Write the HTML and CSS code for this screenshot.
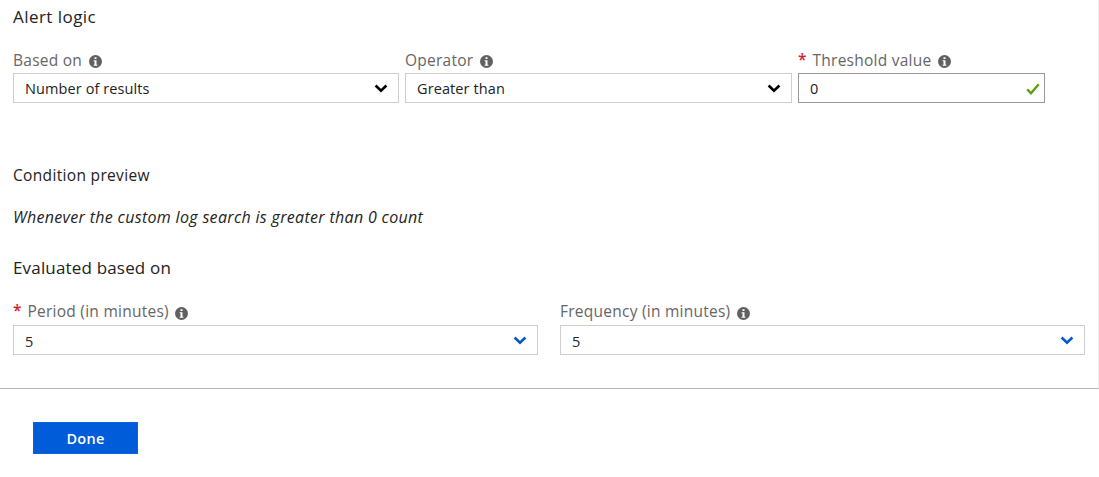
FILE: index.html
```html
<!DOCTYPE html>
<html lang="en">
<head>
<meta charset="utf-8">
<title>Alert logic</title>
<link rel="stylesheet" href="styles.css">
</head>
<body>
<svg class="defs" width="0" height="0" aria-hidden="true">
  <symbol id="info" viewBox="0 0 13 13"><circle cx="6.5" cy="6.5" r="6.5" fill="#606060"/><path d="M5.5 2.2h2v1.9h-2zM4.6 5.2h2.9v4.5h.9v1.1H4.6V9.7h.9V6.3h-.9z" fill="#fff"/></symbol>
  <symbol id="chevron" viewBox="0 0 14 9"><path d="M1.6 1.5 7 6.6l5.4-5.1" fill="none" stroke="currentColor" stroke-width="2.6"/></symbol>
  <symbol id="check" viewBox="0 0 14 12"><path d="M1.2 6.4 5 10.2 12.7 1.2" fill="none" stroke="currentColor" stroke-width="2.3"/></symbol>
</svg>
<main class="panel">
  <h2 class="title"><span class="t-alert">Alert logic</span></h2>
  <div class="row logic">
    <div class="field">
      <label class="label"><span>Based on</span><svg class="info"><use href="#info"/></svg></label>
      <div class="box"><span>Number of results</span><svg class="chevron"><use href="#chevron"/></svg></div>
    </div>
    <div class="field">
      <label class="label"><span>Operator</span><svg class="info"><use href="#info"/></svg></label>
      <div class="box"><span>Greater than</span><svg class="chevron"><use href="#chevron"/></svg></div>
    </div>
    <div class="field">
      <label class="label"><b class="star">*</b><span>Threshold value</span><svg class="info"><use href="#info"/></svg></label>
      <div class="box valid"><span>0</span><svg class="check"><use href="#check"/></svg></div>
    </div>
  </div>
  <h3 class="subtitle"><span>Condition preview</span></h3>
  <p class="preview"><span>Whenever the custom log search is greater than 0 count</span></p>
  <h2 class="title"><span>Evaluated based on</span></h2>
  <div class="row timing">
    <div class="field">
      <label class="label"><b class="star">*</b><span>Period (in minutes)</span><svg class="info"><use href="#info"/></svg></label>
      <div class="box blue"><span>5</span><svg class="chevron"><use href="#chevron"/></svg></div>
    </div>
    <div class="field">
      <label class="label"><span>Frequency (in minutes)</span><svg class="info"><use href="#info"/></svg></label>
      <div class="box blue"><span>5</span><svg class="chevron"><use href="#chevron"/></svg></div>
    </div>
  </div>
</main>
<footer class="footer"><button class="done"><span>Done</span></button></footer>
</body>
</html>
```
FILE: styles.css
```css
* { box-sizing: border-box; }
body { margin: 0; height: 477px; overflow: hidden; background: #fff; color: #222; font-family: "Open Sans", "Noto Sans", sans-serif; font-size: 14.5px; }
h2, h3, p { margin: 0; font-weight: 400; }
span { white-space: nowrap; }
.defs { display: block; }
.panel { height: 389px; padding: 5px 13px 0; border-bottom: 1px solid #b5b5b5; border-right: 1px solid #ececec; }
.title { height: 24px; line-height: 24px; font-size: 17px; letter-spacing: .17px; }
.t-alert { letter-spacing: .45px; }
.row { display: grid; }
.logic { grid-template-columns: 386px 387px 247px; column-gap: 6px; margin-top: 20px; }
.timing { grid-template-columns: 525px 525px; column-gap: 22px; margin-top: 21px; }
.label { display: flex; align-items: center; height: 24px; padding-bottom: 2px; color: #666; font-size: 15.5px; line-height: 22px; letter-spacing: .25px; }
.timing .label { padding-bottom: 4px; }
.timing .info { margin-top: 4px; }
.star { width: 14.5px; padding-bottom: 2px; color: #d0202e; font-size: 15.5px; font-weight: 600; letter-spacing: 0; }
.info { width: 13px; height: 13px; margin: 2px 0 0 6.5px; flex: none; }
.box { display: flex; align-items: center; justify-content: space-between; height: 30px; padding: 0 10px 0 11px; border: 1px solid #cfcfcf; color: #222; letter-spacing: .1px; }
.blue { padding-top: 2px; }
.valid { border-color: #999; padding-right: 4px; }
.chevron { width: 14px; height: 9px; margin-top: 1px; color: #000; }
.blue .chevron { color: #0a57c8; margin-top: -2px; }
.check { width: 14px; height: 12px; margin-top: 1px; color: #579f14; }
.subtitle { margin-top: 60px; height: 24px; line-height: 25px; font-size: 15.5px; letter-spacing: .33px; }
.preview { margin: 19px 0 26px; height: 24px; line-height: 23px; font-size: 16px; font-style: italic; letter-spacing: .32px; }
.footer { padding: 33px; }
.done { display: block; width: 105px; height: 32px; padding: 2px 0 0; border: 1px solid #0b62dc; background: #015cda; color: #fff; font: 600 14.5px/28px "Open Sans", sans-serif; letter-spacing: .3px; }
```
